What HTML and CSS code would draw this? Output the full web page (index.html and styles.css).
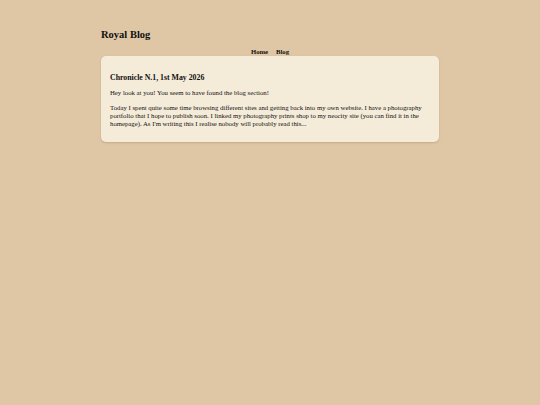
FILE: index.html
```html
<!DOCTYPE html>
<html>
<head>
<meta charset="utf-8">
<link rel="stylesheet" href="styles.css">
</head>
<body>
<div class="page">
  <h1 class="site-title">Royal Blog</h1>
  <nav class="nav">
    <a href="#">Home</a>
    <a href="#">Blog</a>
  </nav>
  <main class="card">
    <h2 class="post-title">Chronicle N.1, 1st May 2026</h2>
    <p class="post-text">Hey look at you! You seem to have found the blog section!</p>
    <p class="post-text">Today I spent quite some time browsing different sites and getting back into my own website. I have a photography portfolio that I hope to publish soon. I linked my photography prints shop to my neocity site (you can find it in the homepage). As I'm writing this I realise nobody will probably read this...</p>
  </main>
</div>
</body>
</html>
```

FILE: styles.css
```css
html, body {
  margin: 0;
  padding: 0;
}
body {
  background: #dfc6a4;
  font-family: "Liberation Serif", "Times New Roman", serif;
  color: #111;
  min-height: 405px;
}
.page {
  width: 338px;
  margin: 0 auto;
  padding-top: 28px;
}
.site-title {
  font-size: 10.5px;
  font-weight: bold;
  margin: 0;
  line-height: 14px;
}
.nav {
  display: flex;
  justify-content: center;
  gap: 8px;
  margin-top: 6px;
  line-height: 8px;
}
.nav a {
  color: #111;
  text-decoration: none;
  font-weight: bold;
  font-size: 6.7px;
}
.card {
  background: #f5ebd9;
  border-radius: 5px;
  padding: 17px 9px 14px;
  box-shadow: 0 1px 2px rgba(120, 90, 50, 0.25);
}
.post-title {
  font-size: 7.8px;
  margin: 0 0 6px;
  line-height: 10px;
}
.post-text {
  font-size: 6.75px;
  line-height: 8px;
  margin: 0 0 7px;
}
.post-text:last-child {
  margin-bottom: 0;
}
```
